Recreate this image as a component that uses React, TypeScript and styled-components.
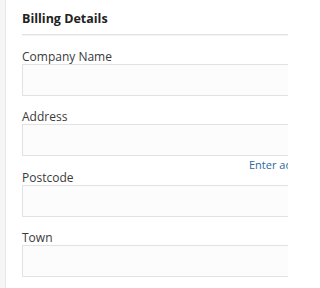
import React from "react";
import styled, { createGlobalStyle } from "styled-components";

const Global = createGlobalStyle`
  html, body { margin: 0; padding: 0; background: #ffffff; overflow: hidden; }
  body { font-family: "Open Sans", "Liberation Sans", sans-serif; color: #333333; }
  * { box-sizing: border-box; }
`;

const Page = styled.div`
  display: flex;
  width: 288px;
  height: 288px;
  overflow: hidden;
  background: #ffffff;
`;

const SideStrip = styled.div`
  flex: 0 0 6px;
  background: #f6f6f6;
  border-right: 1px solid #e6e6e6;
`;

const Panel = styled.div`
  flex: 1 1 auto;
  min-width: 0;
  overflow: hidden;
  padding: 10px 0 0 16px;
`;

const Title = styled.h3`
  margin: 0;
  font-size: 12.5px;
  font-weight: 700;
  line-height: 17px;
  color: #222222;
  padding-bottom: 7px;
  border-bottom: 1px solid #e2e2e2;
  box-shadow: 0 1px 0 #f4f4f4;
`;

const Field = styled.div<{ $gap?: number }>`
  display: flex;
  flex-direction: column;
  padding-top: ${(p) => (p.$gap ?? 13)}px;
`;

const Label = styled.label`
  font-size: 12px;
  line-height: 15px;
  color: #3a3a3a;
`;

const Input = styled.div`
  height: 32px;
  border: 1px solid #e2e2e2;
  border-right: none;
  background: #fcfcfc;
`;

const Hint = styled.a`
  display: block;
  margin: 2px 0 -1px 227px;
  font-size: 11px;
  line-height: 13px;
  color: #2c6aa0;
  white-space: nowrap;
  text-decoration: none;
`;

export default function App() {
  return (
    <Page>
      <Global />
      <SideStrip />
      <Panel>
        <Title>Billing Details</Title>
        <Field $gap={14}>
          <Label>Company Name</Label>
          <Input />
        </Field>
        <Field>
          <Label>Address</Label>
          <Input />
          <Hint>Enter address manually</Hint>
        </Field>
        <Field $gap={0}>
          <Label>Postcode</Label>
          <Input />
        </Field>
        <Field>
          <Label>Town</Label>
          <Input />
        </Field>
      </Panel>
    </Page>
  );
}
